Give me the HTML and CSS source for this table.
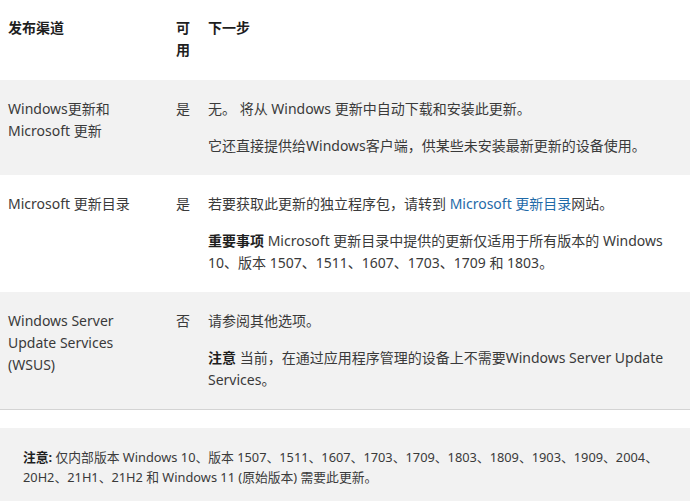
FILE: index.html
```html
<!DOCTYPE html>
<html lang="zh-CN">
<head>
<meta charset="utf-8">
<link rel="stylesheet" href="styles.css">
</head>
<body>
<div class="page">
  <div class="table">
    <div class="row head">
      <div class="c1">发布渠道</div>
      <div class="c2">可用</div>
      <div class="c3">下一步</div>
    </div>
    <div class="row alt">
      <div class="c1">Windows更新和 Microsoft 更新</div>
      <div class="c2">是</div>
      <div class="c3">
        <p>无。 将从 Windows 更新中自动下载和安装此更新。</p>
        <p>它还直接提供给Windows客户端，供某些未安装最新更新的设备使用。</p>
      </div>
    </div>
    <div class="row">
      <div class="c1">Microsoft 更新目录</div>
      <div class="c2">是</div>
      <div class="c3">
        <p>若要获取此更新的独立程序包，请转到 <a class="link" href="#">Microsoft 更新目录</a>网站。</p>
        <p><b>重要事项</b> Microsoft 更新目录中提供的更新仅适用于所有版本的 Windows 10、版本 1507、1511、1607、1703、1709 和 1803。</p>
      </div>
    </div>
    <div class="row alt last">
      <div class="c1">Windows Server Update Services (WSUS)</div>
      <div class="c2">否</div>
      <div class="c3">
        <p>请参阅其他选项。</p>
        <p><b>注意</b> 当前，在通过应用程序管理的设备上不需要Windows Server Update Services。</p>
      </div>
    </div>
  </div>
  <div class="note">
    <p><b>注意:</b> 仅内部版本 Windows 10、版本 1507、1511、1607、1703、1709、1803、1809、1903、1909、2004、20H2、21H1、21H2 和 Windows 11 (原始版本) 需要此更新。</p>
  </div>
</div>
</body>
</html>
```

FILE: styles.css
```css
html, body {
  margin: 0;
  padding: 0;
  background: #ffffff;
}
body {
  font-family: "Noto Sans", "Noto Sans CJK SC", sans-serif;
  font-size: 14px;
  line-height: 22px;
  color: #3a3a3a;
}
.page {
  width: 690px;
}
.row {
  display: grid;
  grid-template-columns: 168px 32px 1fr;
  padding: 18px 0 18px 0;
}
.row.alt {
  background: #f2f2f2;
}
.row.head {
  color: #1e1e1e;
  font-weight: bold;
  padding: 17px 0 19px 0;
}
.row.last {
  border-bottom: 1px solid #d4d4d4;
}
.c1 {
  padding: 0 20px 0 8px;
}
.c2 {
  padding: 0 8px;
}
.c3 {
  padding: 0 8px;
}
.c3 p {
  margin: 0 0 15px 0;
}
.c3 p:last-child {
  margin-bottom: 0;
}
b {
  color: #1e1e1e;
  font-weight: bold;
}
.link {
  color: #1f6aa8;
  text-decoration: none;
}
.note {
  margin-top: 18px;
  background: #f2f2f2;
  padding: 19px 20px 30px 23px;
  font-size: 12.8px;
  line-height: 20px;
}
.note p {
  margin: 0;
}
```
